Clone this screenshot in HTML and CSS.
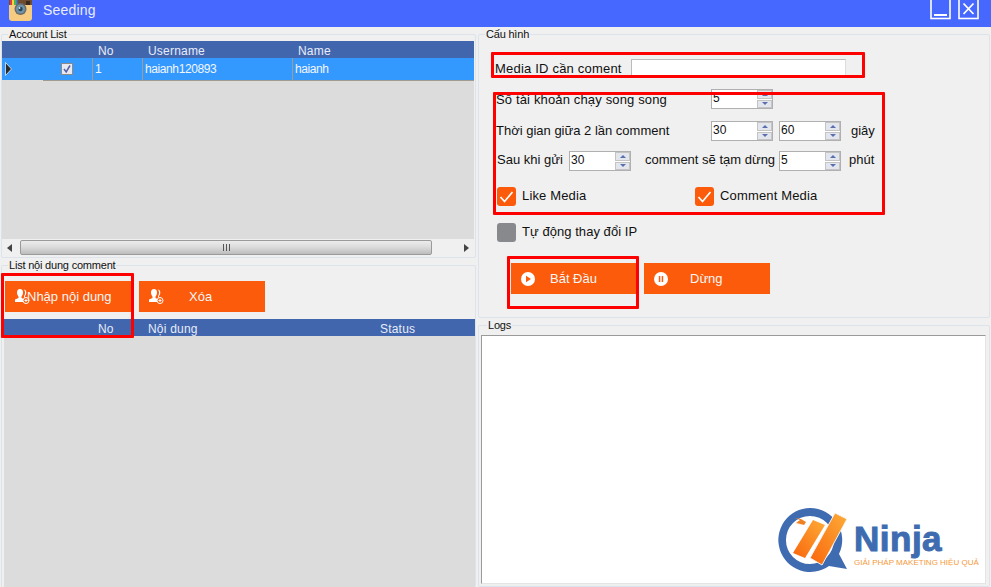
FILE: index.html
```html
<!DOCTYPE html>
<html lang="vi">
<head>
<meta charset="utf-8">
<title>Seeding</title>
<link rel="stylesheet" href="styles.css">
</head>
<body>
<div class="window">
  <header class="titlebar">
    <svg class="app-icon" width="24" height="22" viewBox="0 0 24 22">
      <rect x="0" y="-4" width="23" height="25" rx="3" fill="#f6cb82"/>
      <path d="M0 0h23v5H0z" fill="#6f4b30"/>
      <path d="M1 0h2v5H1z" fill="#e23b3b"/><path d="M3 0h2v5H3z" fill="#f5d33c"/><path d="M5 0h2v5H5z" fill="#4bb05a"/><path d="M7 0h1.500v5H7z" fill="#3d7fd0"/>
      <path d="M17 1h4v4h-4z" fill="#3a2a20"/>
      <circle cx="11.500" cy="9" r="6" fill="#6a6a68"/>
      <circle cx="11.500" cy="9" r="4.500" fill="#6f94a8"/>
      <circle cx="11.500" cy="9" r="2.200" fill="#27465a"/>
      <circle cx="10.500" cy="8" r="0.900" fill="#cfe4f0"/>
    </svg>
    <span class="title-text">Seeding</span>
    <div class="win-buttons">
      <svg class="win-btn" width="21" height="20" viewBox="0 0 21 20"><rect x="1" y="-1" width="19" height="19.500" fill="none" stroke="#fff" stroke-width="1.600"/><path d="M4 15h13" stroke="#fff" stroke-width="2"/></svg>
      <svg class="win-btn" width="21" height="20" viewBox="0 0 21 20"><rect x="1" y="-1" width="19" height="19.500" fill="none" stroke="#fff" stroke-width="1.600"/><path d="M5.500 3.500l10 10.500M15.500 3.500l-10 10.500" stroke="#fff" stroke-width="1.800"/></svg>
    </div>
  </header>

  <main class="content">
    <section class="col-left">
      <fieldset class="group group-accounts">
        <legend>Account List</legend>
        <div class="grid-head cols-a">
          <span></span><span></span><span>No</span><span>Username</span><span>Name</span>
        </div>
        <div class="grid-row cols-a">
          <span class="row-mark"><svg width="7" height="14" viewBox="0 0 7 14"><path d="M0.500 0.500l6 6.500-6 6.500z" fill="#2b2b2b" stroke="#fff" stroke-width="0.700"/></svg></span>
          <span class="cell-check"><svg width="12" height="12" viewBox="0 0 12 12"><rect x="0.500" y="0.500" width="11" height="11" fill="#e8e8ee" stroke="#8a8a8a"/><path d="M3 6l2.200 3L9 2.500" fill="none" stroke="#5161a8" stroke-width="1.500"/></svg></span>
          <span class="cell">1</span><span class="cell">haianh120893</span><span class="cell">haianh</span>
        </div>
        <div class="grid-empty grid-empty-a"></div>
        <div class="hscroll">
          <svg class="arrow" width="5" height="8" viewBox="0 0 5 8"><path d="M5 0v8L0 4z" fill="#444"/></svg>
          <div class="hthumb"><span class="grip"></span></div>
          <svg class="arrow" width="5" height="8" viewBox="0 0 5 8"><path d="M0 0v8l5-4z" fill="#444"/></svg>
        </div>
      </fieldset>

      <fieldset class="group group-comments">
        <legend>List nội dung comment</legend>
        <div class="btn-row btn-row-left">
          <button class="action action-import">
            <svg class="users" width="15" height="15" viewBox="0 0 15 15"><path d="M5 0c2 0 3 1.500 3 3.500S7 7 6.500 7.500V9l3 1.500V13H0v-2.500L3.500 9V7.500C3 7 2 5.500 2 3.500S3 0 5 0z" fill="#fff"/><path d="M8.500 0.500c1.800 0 2.800 1.300 2.800 3S10.500 6.500 10 7v1l1 .5H9V7c.8-1 1-2 1-3.500 0-1.200-.5-2.300-1.500-3z" fill="#fff"/><circle cx="11" cy="11.500" r="3" fill="#fb5b0b" stroke="#fff"/><path d="M11 10v3M9.500 11.500h3" stroke="#fff"/></svg>
            <span>Nhập nội dung</span>
          </button>
          <button class="action action-delete">
            <svg class="users" width="15" height="15" viewBox="0 0 15 15"><path d="M5 0c2 0 3 1.500 3 3.500S7 7 6.500 7.500V9l3 1.500V13H0v-2.500L3.500 9V7.500C3 7 2 5.500 2 3.500S3 0 5 0z" fill="#fff"/><path d="M8.500 0.500c1.800 0 2.800 1.300 2.800 3S10.500 6.500 10 7v1l1 .5H9V7c.8-1 1-2 1-3.500 0-1.200-.5-2.300-1.500-3z" fill="#fff"/><circle cx="11" cy="11.500" r="3" fill="#fb5b0b" stroke="#fff"/><path d="M11 10v3M9.500 11.500h3" stroke="#fff"/></svg>
            <span>Xóa</span>
          </button>
        </div>
        <div class="grid-head cols-b">
          <span></span><span class="col-no">No</span><span>Nội dung</span><span>Status</span>
        </div>
        <div class="grid-empty grid-empty-b"></div>
      </fieldset>
    </section>

    <section class="col-right">
      <fieldset class="group group-config">
        <legend>Cấu hình</legend>
        <div class="form-row row-media">
          <span class="lbl-media">Media ID cần coment</span>
          <span class="textbox"></span>
        </div>
        <div class="form-row row-parallel">
          <span class="lbl-a">Số tài khoản chạy song song</span>
          <span class="spin"><span class="spin-val">5</span><span class="spin-btns"><i class="up"></i><i class="down"></i></span></span>
        </div>
        <div class="form-row row-interval">
          <span class="lbl-a lbl-raise">Thời gian giữa 2 lần comment</span>
          <span class="spin"><span class="spin-val">30</span><span class="spin-btns"><i class="up"></i><i class="down"></i></span></span>
          <span class="spin"><span class="spin-val">60</span><span class="spin-btns"><i class="up"></i><i class="down"></i></span></span>
          <span class="unit-sec lbl-raise">giây</span>
        </div>
        <div class="form-row row-pause">
          <span class="lbl-b lbl-raise2">Sau khi gửi</span>
          <span class="spin"><span class="spin-val">30</span><span class="spin-btns"><i class="up"></i><i class="down"></i></span></span>
          <span class="lbl-c lbl-raise2">comment sẽ tạm dừng</span>
          <span class="spin"><span class="spin-val">5</span><span class="spin-btns"><i class="up"></i><i class="down"></i></span></span>
          <span class="unit-min lbl-raise2">phút</span>
        </div>
        <div class="form-row row-checks">
          <span class="check-item check-like"><span class="check on"><svg width="19" height="19" viewBox="0 0 19 19"><path d="M3.500 10l4 4.500L15.500 5" fill="none" stroke="#fff" stroke-width="1.700"/></svg></span><span class="lbl-raise">Like Media</span></span>
          <span class="check-item"><span class="check on"><svg width="19" height="19" viewBox="0 0 19 19"><path d="M3.500 10l4 4.500L15.500 5" fill="none" stroke="#fff" stroke-width="1.700"/></svg></span><span class="lbl-raise">Comment Media</span></span>
        </div>
        <div class="form-row row-ip">
          <span class="check-item check-ip"><span class="check off"></span><span class="lbl-raise">Tự động thay đổi IP</span></span>
        </div>
        <div class="btn-row btn-row-right">
          <button class="action action-start">
            <svg width="14" height="14" viewBox="0 0 14 14"><circle cx="7" cy="7" r="7" fill="#fff"/><path d="M5 3.800v6.400L10 7z" fill="#fb5b0b"/></svg>
            <span>Bắt Đầu</span>
          </button>
          <button class="action action-stop">
            <svg width="14" height="14" viewBox="0 0 14 14"><circle cx="7" cy="7" r="7" fill="#fff"/><path d="M4.800 4h1.500v6H4.800zM7.700 4h1.500v6H7.700z" fill="#fb5b0b"/></svg>
            <span>Dừng</span>
          </button>
        </div>
      </fieldset>

      <fieldset class="group group-logs">
        <legend>Logs</legend>
        <div class="logbox"></div>
      </fieldset>
    </section>
  </main>

  <div class="mark mark-media"></div>
  <div class="mark mark-settings"></div>
  <div class="mark mark-start"></div>
  <div class="mark mark-import"></div>

  <div class="logo">
    <svg class="logo-mark" width="76" height="72" viewBox="0 0 76 72">
      <defs>
        <linearGradient id="bar" x1="0" y1="1" x2="1" y2="0"><stop offset="0" stop-color="#f9660c"/><stop offset="1" stop-color="#fdac38"/></linearGradient>
      </defs>
      <path d="M34 3a32 32 0 1 0 19 58l18 3-8-15A32 32 0 0 0 34 3zm0 8a24 24 0 1 1-.1 48 24 24 0 0 1 .1-48z" fill="#3f6cb0"/>
      <path d="M37 15l12 5-20 33-12-5z" fill="url(#bar)"/>
      <path d="M59 8l12 6-25 46-12-7z" fill="url(#bar)" stroke="#f4f4f4" stroke-width="1"/>
      <path d="M14 18l15 2-9-2 4-3-5-2 6 1 5 3-2 3z" fill="#f08020"/>
    </svg>
    <div class="logo-text">
      <span class="logo-name">Ninja</span>
      <span class="logo-sub">GIẢI PHÁP MAKETING HIỆU QUẢ</span>
    </div>
  </div>
</div>
</body>
</html>
```
FILE: styles.css
```css
* { box-sizing: border-box; }
html, body { margin: 0; padding: 0; }
body { background: #f0f0f0; font-family: "Liberation Sans", Arial, sans-serif; font-size: 13px; color: #111; }
.window { position: relative; width: 991px; height: 587px; overflow: hidden; background: #f0f0f0; }

.titlebar { display: flex; align-items: flex-start; height: 27px; background: #4668ff; padding-left: 9px; color: #fff; }
.app-icon { display: block; }
.title-text { margin: 2px 0 0 10px; font-size: 14px; line-height: 17px; color: #e8ecff; letter-spacing: 0.200px; }
.win-buttons { display: flex; gap: 7px; margin-left: auto; margin-right: 12px; }
.win-btn { display: block; }

.content { display: flex; height: 560px; }
.col-left { width: 478px; padding-left: 1px; display: flex; flex-direction: column; }
.col-right { width: 513px; display: flex; flex-direction: column; }

.group { margin: 0; padding: 0; border: 1px solid #dce3ea; border-radius: 2px; min-width: 0; }
.group legend { margin-left: 6px; padding: 0 1px; font-size: 11px; line-height: 14px; letter-spacing: -0.200px; color: #111; }
.group-accounts { width: 475px; height: 231px; }
.group-comments { width: 475px; height: 329px; padding-top: 9px; border-bottom: 0; }
.group-config { width: 512px; height: 291px; }
.group-logs { width: 512px; height: 269px; padding: 3px 0 0 2px; }

.grid-head { height: 17px; background: #4166ae; color: #e8ecf8; font-size: 12px; line-height: 20px; letter-spacing: 0.200px; overflow: hidden; }
.grid-row { height: 22px; background: #3399ff; color: #f2f6ff; font-size: 12px; line-height: 22px; letter-spacing: -0.400px; }
.cols-a { display: grid; grid-template-columns: 41px 49px 50px 150px 1fr; width: 472px; }
.cols-a.grid-head span { padding-left: 6px; }
.cols-b { display: grid; grid-template-columns: 89px 25px 232px 1fr; width: 471px; margin-left: 2px; }
.cols-b.grid-head { line-height: 20px; }
.col-no { padding-left: 5px; }
.cols-b span:nth-child(3) { padding-left: 30px; }
.cols-b span:nth-child(4) { padding-left: 30px; }
.grid-row .cell { border-left: 1px solid #a09a90; padding-left: 2px; border-bottom: 1px solid #a09a90; }
.row-mark { padding: 4px 0 0 3px; }
.row-mark svg, .cell-check svg { display: block; }
.cell-check { display: flex; justify-content: center; align-items: center; padding-right: 1px; border-bottom: 1px solid #a09a90; }
.grid-empty { background: #dcdcdc; }
.grid-empty-a { width: 472px; height: 159px; }
.grid-empty-b { width: 471px; height: 252px; margin-left: 2px; }

.hscroll { display: flex; align-items: center; width: 472px; height: 17px; padding: 0 5px; background: #f0f0f0; gap: 8px; }
.hscroll .arrow:last-child { margin-left: 24px; }
.hthumb { width: 412px; height: 15px; border: 1px solid #9a9a9a; border-radius: 2px; background: linear-gradient(#ececec, #dcdcdc 45%, #bdbdbd); display: flex; align-items: center; justify-content: center; }
.grip { width: 7px; height: 7px; background: repeating-linear-gradient(90deg, #555 0 1px, transparent 1px 3px); }

.btn-row { display: flex; gap: 8px; }
.btn-row-left { margin-left: 3px; margin-bottom: 7px; }
.btn-row-right { margin: 21px 0 0 32px; }
.action { display: flex; align-items: center; width: 126px; height: 31px; padding: 0 0 0 10px; border: 0; background: #fb5b0b; color: #f6f6f6; font: 13px "Liberation Sans", Arial, sans-serif; text-align: left; }
.action svg { flex: none; display: block; }
.action-import span { margin-left: -3px; }
.action-delete span { margin-left: 25px; }
.action-start { width: 125px; }
.action-start span { margin-left: 15px; }
.action-stop span { margin-left: 22px; }

.form-row { display: flex; align-items: center; }
.row-media { height: 20px; margin: 17px 0 0 16px; }
.lbl-media { width: 136px; letter-spacing: 0.200px; }
.textbox { width: 215px; height: 19px; background: #fff; border: 1px solid #bbb; border-right-color: #ddd; border-bottom-color: #ddd; }
.row-parallel { height: 20px; margin: 11px 0 0 17px; }
.lbl-a { width: 215px; letter-spacing: 0.150px; }
.row-interval { height: 20px; margin: 12px 0 0 17px; }
.row-interval .lbl-a { letter-spacing: 0; }
.row-interval .spin + .spin { margin-left: 6px; }
.unit-sec { margin-left: 10px; }
.row-pause { height: 20px; margin: 10px 0 0 18px; }
.lbl-b { width: 72px; }
.lbl-c { width: 134px; margin-left: 14px; }
.unit-min { margin-left: 8px; }
.lbl-raise { position: relative; top: -1px; }
.lbl-raise2 { position: relative; top: -2px; }
.row-checks { height: 19px; margin: 16px 0 0 18px; }
.row-ip { height: 19px; margin: 17px 0 0 18px; }
.check-item { display: flex; align-items: center; gap: 6px; letter-spacing: 0.150px; }
.check-ip { letter-spacing: 0.050px; }
.check-like { width: 198px; }
.check { display: block; width: 19px; height: 19px; border-radius: 3px; }
.check svg { display: block; }
.check.on { background: #fb5b0b; }
.check.off { background: #88898d; }

.spin { display: flex; width: 62px; height: 20px; background: #fff; border: 1px solid #b0b0b0; flex: none; font-size: 12px; }
.spin-val { flex: 1; padding-left: 1px; line-height: 17px; color: #111; }
.spin-btns { display: flex; flex-direction: column; width: 15px; height: 18px; gap: 1px; }
.spin-btns i { display: flex; align-items: center; justify-content: center; flex: 1; background: #e4e6ee; border: 1px solid #c4c4c4; }
.spin-btns i::before { content: ""; border-left: 3px solid transparent; border-right: 3px solid transparent; }
.spin-btns .up::before { border-bottom: 3px solid #5a6fb0; }
.spin-btns .down::before { border-top: 3px solid #5a6fb0; }

.logbox { width: 505px; height: 249px; background: #fff; border: 1px solid #9a9a9a; border-right-color: #e4e4e4; border-bottom-color: #e4e4e4; }

.mark { position: absolute; border: 3px solid #f00; border-radius: 1px; }
.mark-media { left: 491px; top: 52px; width: 374px; height: 26px; }
.mark-settings { left: 493px; top: 92px; width: 392px; height: 123px; }
.mark-start { left: 507px; top: 256px; width: 132px; height: 53px; }
.mark-import { left: 1px; top: 273px; width: 133px; height: 65px; }

.logo { position: absolute; left: 776px; top: 505px; display: flex; }
.logo-mark { display: block; }
.logo-text { display: flex; flex-direction: column; margin-left: 2px; padding-top: 17px; }
.logo-name { font: 900 35px/34px "Liberation Sans", Arial, sans-serif; color: #3f6cb0; -webkit-text-stroke: 1px #3f6cb0; letter-spacing: 0.500px; }
.logo-sub { font-size: 8px; line-height: 9px; color: #f59a3c; white-space: nowrap; margin-top: 2px; }
```
